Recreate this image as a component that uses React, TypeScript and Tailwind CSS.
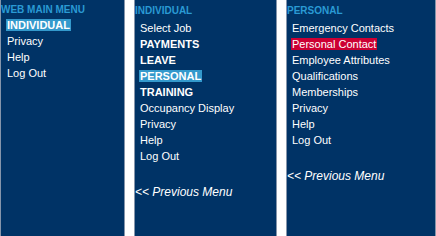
import React from "react";

type Item = { label: string; bold?: boolean; hi?: "blue" | "red" };

const font = { fontFamily: '"Liberation Sans", Arial, sans-serif' };

function Row({ item }: { item: Item }) {
  const hiClass =
    item.hi === "blue"
      ? "bg-[#3399cc]"
      : item.hi === "red"
      ? "bg-[#cc0033]"
      : "";
  return (
    <div className="h-4 leading-4 text-[11px] text-white whitespace-nowrap">
      <span
        className={`${hiClass} ${item.bold ? "font-bold uppercase" : ""} px-[1px] -ml-[1px]`}
      >
        {item.label}
      </span>
    </div>
  );
}

function Panel({
  title,
  items,
  width,
  first,
  prev,
}: {
  title: string;
  items: Item[];
  width: string;
  first?: boolean;
  prev?: boolean;
}) {
  return (
    <div
      className={`${width} h-full bg-[#003366] border-x border-[#8595ab] flex flex-col`}
    >
      <div
        className={`${first ? "pt-[3px]" : "pt-[4px]"} leading-[14px] text-[10px] font-bold text-[#2a9ad4] whitespace-nowrap`}
      >
        {title}
      </div>
      <div className={`${first ? "pl-[6px] mt-0" : "pl-[5px] mt-[2px]"}`}>
        {items.map((it) => (
          <Row key={it.label} item={it} />
        ))}
      </div>
      {prev && (
        <div className="mt-5 h-4 leading-4 text-[12px] italic text-white whitespace-nowrap">
          &lt;&lt; Previous Menu
        </div>
      )}
    </div>
  );
}

export default function App() {
  return (
    <div className="w-[436px] h-[236px] flex bg-white overflow-hidden" style={font}>
      <Panel
        first
        width="w-[125px]"
        title="WEB MAIN MENU"
        items={[
          { label: "INDIVIDUAL", bold: true, hi: "blue" },
          { label: "Privacy" },
          { label: "Help" },
          { label: "Log Out" },
        ]}
      />
      <div className="w-[9px]" />
      <Panel
        width="w-[143px]"
        title="INDIVIDUAL"
        prev
        items={[
          { label: "Select Job" },
          { label: "PAYMENTS", bold: true },
          { label: "LEAVE", bold: true },
          { label: "PERSONAL", bold: true, hi: "blue" },
          { label: "TRAINING", bold: true },
          { label: "Occupancy Display" },
          { label: "Privacy" },
          { label: "Help" },
          { label: "Log Out" },
        ]}
      />
      <div className="w-[9px]" />
      <Panel
        width="w-[150px]"
        title="PERSONAL"
        prev
        items={[
          { label: "Emergency Contacts" },
          { label: "Personal Contact", hi: "red" },
          { label: "Employee Attributes" },
          { label: "Qualifications" },
          { label: "Memberships" },
          { label: "Privacy" },
          { label: "Help" },
          { label: "Log Out" },
        ]}
      />
    </div>
  );
}
